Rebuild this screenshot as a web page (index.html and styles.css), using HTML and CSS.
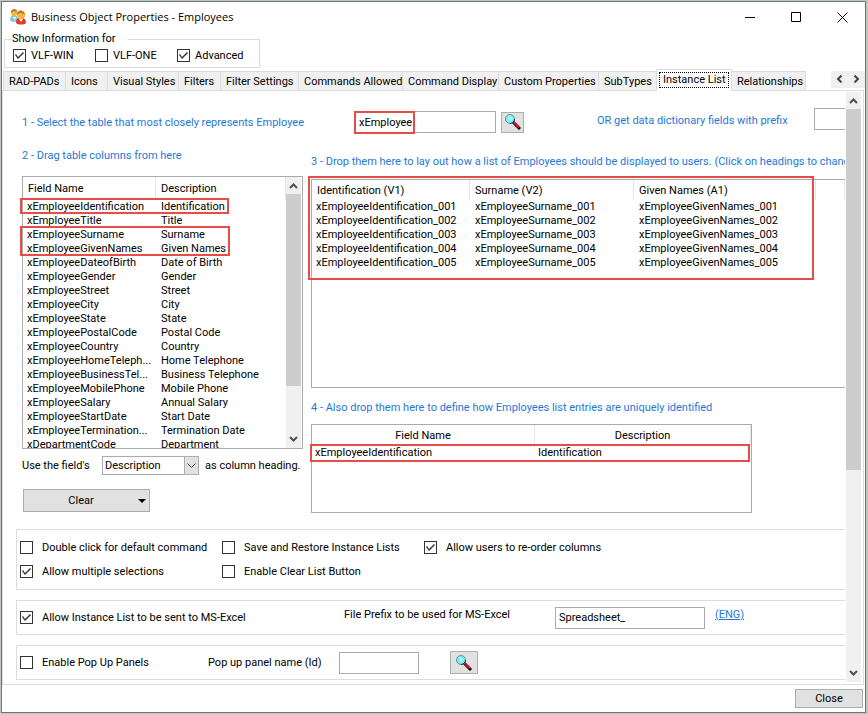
FILE: index.html
```
<!DOCTYPE html>
<html lang="en">
<head>
    <meta charset="UTF-8">
    <meta name="viewport" content="width=device-width, initial-scale=1.0">
    <title>Business Object Properties - Employees</title>
    <link rel="stylesheet" href="styles.css">
</head>
<body>

    <div class="window">
        <header class="titlebar">
            <svg class="app-icon" viewBox="0 0 16 16" width="16" height="16">
                <path d="M0 11c0-3 1-5 4-5s4 2 4 5l-3 2c-2 0-4 0-5-2z" fill="#8cc4ee"/>
                <path d="M3 8l2 3 1-3z" fill="#fff"/>
                <circle cx="4" cy="4" r="3" fill="#f3b53c"/>
                <path d="M1 4c-1-5 7-5 6-1-2-1-4-1-6 1z" fill="#c07c1c"/>
                <path d="M6 14c0-4 1-5 5-5s5 2 5 5c-2 2-8 2-10 0z" fill="#dd3b26"/>
                <path d="M9 10l2 3 2-3z" fill="#fff"/>
                <circle cx="11" cy="6" r="4" fill="#f5b83d"/>
                <path d="M7 6c-1-6 8-6 8 0-2-2-5-3-8 0z" fill="#c07c1c"/>
            </svg>
            <h1>Business Object Properties - Employees</h1>
            <div class="window-buttons">
                <button type="button" aria-label="Minimize"><svg viewBox="0 0 11 11" width="11" height="11"><path d="M0 5.500h10"/></svg></button>
                <button type="button" aria-label="Maximize"><svg viewBox="0 0 11 11" width="11" height="11"><path d="M.5.5h9v9h-9z"/></svg></button>
                <button type="button" aria-label="Close window"><svg viewBox="0 0 11 11" width="11" height="11"><path d="M.5.5l10 10M10.500.5l-10 10"/></svg></button>
            </div>
        </header>

        <fieldset class="show-info">
            <legend>Show Information for</legend>
            <label><input type="checkbox" checked> VLF-WIN</label>
            <label><input type="checkbox"> VLF-ONE</label>
            <label><input type="checkbox" checked> Advanced</label>
        </fieldset>

        <nav class="tabbar">
            <div class="tabs">
                <button type="button">RAD-PADs</button>
                <button type="button">Icons</button>
                <button type="button">Visual Styles</button>
                <button type="button">Filters</button>
                <button type="button">Filter Settings</button>
                <button type="button">Commands Allowed</button>
                <button type="button">Command Display</button>
                <button type="button">Custom Properties</button>
                <button type="button">SubTypes</button>
                <button type="button" class="active"><span>Instance List</span></button>
                <button type="button">Relationships</button>
            </div>
            <div class="tab-scroll">
                <button type="button" aria-label="Scroll left"><svg viewBox="0 0 7 8" width="7" height="8"><path d="M5.500 0.500L2 4l3.500 3.500"/></svg></button>
                <button type="button" aria-label="Scroll right"><svg viewBox="0 0 7 8" width="7" height="8"><path d="M1.500 0.500L5 4 1.500 7.500"/></svg></button>
            </div>
        </nav>

        <main class="panel">
            <div class="pane">
                <div class="source-row">
                    <label class="step step-table" for="table">1 - Select the table that most closely represents Employee</label>
                    <div class="source-field">
                        <input type="text" id="table" value="xEmployee">
                        <div class="mark mark-value"></div>
                    </div>
                    <button type="button" class="btn-find" aria-label="Find table">
                        <svg viewBox="0 0 16 16" width="16" height="16">
                            <path d="M8 8l7 7" stroke="#000" stroke-width="3"/>
                            <path d="M8 7.500l6 6" stroke="#e0103c" stroke-width="2"/>
                            <circle cx="5" cy="5" r="4.500" fill="#6ef0f4" stroke="#808890"/>
                            <path d="M3 3h1M5 3h1M4 4h1M6 4h1M3 5h1M5 5h1M7 5h1M4 6h1M6 6h1M5 7h1" stroke="#c8ffff"/>
                            <path d="M9.500 5a4.500 4.500 0 0 1-4.500 4.500" fill="none" stroke="#203040"/>
                        </svg>
                    </button>
                    <label class="step" for="prefix">OR get data dictionary fields with prefix</label>
                    <input type="text" id="prefix">
                </div>

                <div class="columns">
                    <section class="col-source">
                        <h2 class="step">2 - Drag table columns from here</h2>
                        <div class="list list-source">
                            <div class="list-rows">
                                <table>
                                    <colgroup><col class="w-field"><col></colgroup>
                                    <thead>
                                        <tr><th>Field Name</th><th>Description</th></tr>
                                    </thead>
                                    <tbody>
                                        <tr><td>xEmployeeIdentification</td><td>Identification</td></tr>
                                        <tr><td>xEmployeeTitle</td><td>Title</td></tr>
                                        <tr><td>xEmployeeSurname</td><td>Surname</td></tr>
                                        <tr><td>xEmployeeGivenNames</td><td>Given Names</td></tr>
                                        <tr><td>xEmployeeDateofBirth</td><td>Date of Birth</td></tr>
                                        <tr><td>xEmployeeGender</td><td>Gender</td></tr>
                                        <tr><td>xEmployeeStreet</td><td>Street</td></tr>
                                        <tr><td>xEmployeeCity</td><td>City</td></tr>
                                        <tr><td>xEmployeeState</td><td>State</td></tr>
                                        <tr><td>xEmployeePostalCode</td><td>Postal Code</td></tr>
                                        <tr><td>xEmployeeCountry</td><td>Country</td></tr>
                                        <tr><td>xEmployeeHomeTeleph...</td><td>Home Telephone</td></tr>
                                        <tr><td>xEmployeeBusinessTel...</td><td>Business Telephone</td></tr>
                                        <tr><td>xEmployeeMobilePhone</td><td>Mobile Phone</td></tr>
                                        <tr><td>xEmployeeSalary</td><td>Annual Salary</td></tr>
                                        <tr><td>xEmployeeStartDate</td><td>Start Date</td></tr>
                                        <tr><td>xEmployeeTermination...</td><td>Termination Date</td></tr>
                                        <tr><td>xDepartmentCode</td><td>Department</td></tr>
                                    </tbody>
                                </table>
                            </div>
                            <div class="scrollbar">
                                <svg viewBox="0 0 9 6" width="9" height="6"><path d="M1 5l3.500-3.500L8 5"/></svg>
                                <div class="track"><div class="thumb thumb-list"></div></div>
                                <svg viewBox="0 0 9 6" width="9" height="6"><path d="M1 1l3.500 3.500L8 1"/></svg>
                            </div>
                            <div class="mark mark-first"></div>
                            <div class="mark mark-names"></div>
                        </div>
                        <div class="heading-row">
                            <label for="heading">Use the field's</label>
                            <div class="combo">
                                <select id="heading">
                                    <option>Description</option>
                                </select>
                                <span class="combo-arrow"><svg viewBox="0 0 9 6" width="9" height="6"><path d="M.5.5l4 4 4-4"/></svg></span>
                            </div>
                            <span>as column heading.</span>
                        </div>
                        <button type="button" class="btn-clear"><span>Clear</span><i class="caret"></i></button>
                    </section>

                    <section class="col-target">
                        <h2 class="step">3 - Drop them here to lay out how a list of Employees should be displayed to users. (Click on headings to change)</h2>
                        <div class="list list-layout">
                            <table>
                                <colgroup><col class="w-id"><col class="w-surname"><col class="w-given"><col></colgroup>
                                <thead>
                                    <tr><th>Identification (V1)</th><th>Surname (V2)</th><th>Given Names (A1)</th><th></th></tr>
                                </thead>
                                <tbody>
                                    <tr><td>xEmployeeIdentification_001</td><td>xEmployeeSurname_001</td><td>xEmployeeGivenNames_001</td><td></td></tr>
                                    <tr><td>xEmployeeIdentification_002</td><td>xEmployeeSurname_002</td><td>xEmployeeGivenNames_002</td><td></td></tr>
                                    <tr><td>xEmployeeIdentification_003</td><td>xEmployeeSurname_003</td><td>xEmployeeGivenNames_003</td><td></td></tr>
                                    <tr><td>xEmployeeIdentification_004</td><td>xEmployeeSurname_004</td><td>xEmployeeGivenNames_004</td><td></td></tr>
                                    <tr><td>xEmployeeIdentification_005</td><td>xEmployeeSurname_005</td><td>xEmployeeGivenNames_005</td><td></td></tr>
                                </tbody>
                            </table>
                            <div class="mark mark-layout"></div>
                        </div>
                        <h2 class="step step-unique">4 - Also drop them here to define how Employees list entries are uniquely identified</h2>
                        <div class="list list-unique">
                            <table>
                                <colgroup><col class="w-key"><col></colgroup>
                                <thead>
                                    <tr><th>Field Name</th><th>Description</th></tr>
                                </thead>
                                <tbody>
                                    <tr><td>xEmployeeIdentification</td><td>Identification</td></tr>
                                </tbody>
                            </table>
                            <div class="mark mark-unique"></div>
                        </div>
                    </section>
                </div>

                <div class="group group-options">
                    <label><input type="checkbox"> Double click for default command</label>
                    <label><input type="checkbox"> Save and Restore Instance Lists</label>
                    <label><input type="checkbox" checked> Allow users to re-order columns</label>
                    <label><input type="checkbox" checked> Allow multiple selections</label>
                    <label><input type="checkbox"> Enable Clear List Button</label>
                </div>

                <div class="group group-excel">
                    <label><input type="checkbox" checked> Allow Instance List to be sent to MS-Excel</label>
                    <label class="prefix-label" for="file-prefix">File Prefix to be used for MS-Excel</label>
                    <input type="text" id="file-prefix" value="Spreadsheet_">
                    <a href="#">(ENG)</a>
                </div>

                <div class="group group-popup">
                    <label><input type="checkbox"> Enable Pop Up Panels</label>
                    <label for="panel-name">Pop up panel name (Id)</label>
                    <input type="text" id="panel-name">
                    <button type="button" class="btn-find" aria-label="Find panel">
                        <svg viewBox="0 0 16 16" width="16" height="16">
                            <path d="M8 8l7 7" stroke="#000" stroke-width="3"/>
                            <path d="M8 7.500l6 6" stroke="#e0103c" stroke-width="2"/>
                            <circle cx="5" cy="5" r="4.500" fill="#6ef0f4" stroke="#808890"/>
                            <path d="M3 3h1M5 3h1M4 4h1M6 4h1M3 5h1M5 5h1M7 5h1M4 6h1M6 6h1M5 7h1" stroke="#c8ffff"/>
                            <path d="M9.500 5a4.500 4.500 0 0 1-4.500 4.500" fill="none" stroke="#203040"/>
                        </svg>
                    </button>
                </div>
            </div>

            <div class="scrollbar">
                <svg viewBox="0 0 9 6" width="9" height="6"><path d="M1 5l3.500-3.500L8 5"/></svg>
                <div class="track"><div class="thumb thumb-page"></div></div>
                <svg viewBox="0 0 9 6" width="9" height="6"><path d="M1 1l3.500 3.500L8 1"/></svg>
            </div>
        </main>

        <footer>
            <button type="button" class="btn-close">Close</button>
        </footer>
    </div>

</body>
</html>
```
FILE: styles.css
```
* { box-sizing: border-box; }
body { margin: 0; padding: 1px 2px 1px 1px; background: #bfc6c1; color: #000; font: 11px/14px Roboto, "Liberation Sans", sans-serif; }
button, input, select { font: inherit; color: inherit; margin: 0; padding: 0; border-radius: 0; }
button { border: none; background: none; }
h1, h2 { margin: 0; font-weight: normal; }

.window { display: flex; flex-direction: column; min-height: calc(100vh - 2px); border: 1px solid #6b7a70; background: #fff; }

/* title bar */
.titlebar { display: flex; align-items: center; height: 30px; padding-left: 8px; }
.titlebar h1 { flex: 1; padding-left: 5px; font: 11px/16px "Open Sans", sans-serif; }
.window-buttons { display: flex; }
.window-buttons button { display: flex; align-items: center; justify-content: center; width: 46px; height: 28px; }
.window-buttons svg { fill: none; stroke: #000; }

/* checkboxes */
input[type="checkbox"] { appearance: none; flex: none; width: 13px; height: 13px; border: 1px solid #333; background: #fff; }
input[type="checkbox"]:checked::before { content: ""; display: block; width: 11px; height: 11px; background: #333; clip-path: polygon(1px 5px, 2px 4px, 4px 7px, 9px 2px, 10px 3px, 4px 9px); }
label { white-space: nowrap; }

.show-info { display: grid; grid-template-columns: repeat(3, 82px); width: 256px; height: 36px; margin: 0 0 0 2px; padding: 3px 0 0 8px; border: 1px solid #dcdcdc; }
.show-info legend { margin-left: -1px; padding: 0 12px 0 0; }
.show-info label { display: flex; align-items: center; gap: 5px; height: 13px; }

/* tabs */
.tabbar { display: flex; justify-content: space-between; height: 21px; margin-top: 1px; }
.tabs { display: grid; grid-template-columns: 63px 42px 71px 42px 78px 104px 96px 100px 58px 75px 74px; align-items: end; padding-left: 1px; }
.tabs button { height: 19px; padding: 2px 0 0 5px; border: 1px solid #dcdcdc; border-width: 1px 1px 0 0; background: #f0f0f0; text-align: left; white-space: nowrap; }
.tabs button:first-child { border-left-width: 1px; }
.tabs .active { position: relative; height: 22px; margin: 0 0 -1px -1px; padding: 2px; border-left-width: 1px; background: #fff; }
.tabs .active span { display: block; height: 16px; padding-left: 3px; border: 1px dotted #000; margin-bottom: 2px; }
.tab-scroll { display: flex; align-self: flex-start; height: 17px; margin-top: 2px; background: #f0f0f0; }
.tab-scroll button { width: 17px; }
.tab-scroll svg { fill: none; stroke: #444; stroke-width: 2; }

/* panel */
.panel { flex: 1; display: flex; gap: 1px; margin-right: 1px; padding: 1px 2px 2px 0; border: 1px solid #dcdcdc; }
.pane { flex: 1; min-width: 0; overflow: hidden; padding-left: 13px; }
.scrollbar { display: flex; flex-direction: column; align-items: center; width: 15px; padding: 6px 0; background: #f0f0f0; }
.scrollbar svg { flex: none; fill: none; stroke: #505050; stroke-width: 2; }
.track { flex: 1; width: 15px; padding: 5px 0; }
.thumb { background: #cdcdcd; }
.thumb-page { height: 65%; }
.thumb-list { height: 81%; }

.step { color: #1e78d7; font-size: 11px; line-height: 14px; white-space: nowrap; }
input[type="text"] { height: 22px; padding: 0 3px; border: 1px solid #a9abb0; background: #fff; }
.mark { position: absolute; border: 2px solid #e84c46; pointer-events: none; }

.source-row { display: grid; grid-template-columns: 333px 141px 101px 217px 60px; align-items: center; padding: 16px 0 0 6px; }
.step-table { padding-top: 4px; }
.source-field { position: relative; padding-top: 3px; }
.source-field input { display: block; width: 100%; }
#prefix { align-self: start; width: 60px; }
.mark-value { left: -1px; top: 3px; width: 61px; height: 23px; }
.btn-find { display: flex; align-items: center; justify-content: center; height: 21px; border: 1px solid #adadad; background: #e1e1e1; }
.source-row .btn-find { margin: 3px 0 0 5px; width: 23px; }

.columns { display: grid; grid-template-columns: 281px 1fr; gap: 8px; padding-left: 6px; }
.col-source { padding-top: 16px; }
.col-target { min-width: 0; padding-top: 22px; }

/* lists */
.list { position: relative; border: 1px solid #a9abb0; }
.list table { width: 100%; border-collapse: separate; border-spacing: 0; table-layout: fixed; }
.list th { padding: 1px 5px 0; border-right: 1px solid #e5e5e5; font-weight: normal; text-align: left; white-space: nowrap; }
.list td { height: 14px; padding: 0 4px; white-space: nowrap; line-height: 14px; }
.list td:not(:first-child) { padding-left: 5px; }

.list-source { display: flex; height: 273px; margin-top: 13px; }
.list-rows { width: 263px; height: 271px; overflow: hidden; }
.list-source th { height: 23px; }
.list-source .scrollbar { height: 100%; margin: 0 1px 0 auto; }
.w-field { width: 133px; }
.mark-first { left: -3px; top: 21px; width: 209px; height: 16px; }
.mark-names { left: -3px; top: 49px; width: 210px; height: 30px; }

.list-layout { height: 209px; margin-top: 10px; border-right: none; }
.list-layout th { height: 20px; }
.w-id { width: 158px; }
.w-surname { width: 164px; }
.w-given { width: 182px; }
.mark-layout { left: -4px; top: -4px; width: 506px; height: 104px; }

.step-unique { margin-top: 13px; }
.list-unique { max-width: 441px; height: 89px; margin-top: 9px; }
.list-unique th { height: 21px; text-align: center; }
.list-unique td, .list-unique td:not(:first-child) { padding: 0 3px; }
.w-key { width: 223px; }
.mark-unique { left: -2px; top: 19px; width: 440px; height: 18px; }

.heading-row { display: flex; align-items: center; gap: 6px; margin-top: 7px; }
.heading-row label { width: 74px; }
.combo { position: relative; }
.combo select { display: block; width: 97px; height: 19px; padding-left: 2px; border: 1px solid #a9abb0; background: #fff; appearance: none; }
.combo-arrow { position: absolute; right: 0; top: 0; display: flex; align-items: center; justify-content: center; width: 15px; height: 19px; border: 1px solid #adadad; background: #e1e1e1; pointer-events: none; }
.combo-arrow svg { fill: none; stroke: #444; }
.btn-clear { display: flex; align-items: center; width: 127px; height: 23px; margin: 14px 0 0 1px; padding-right: 3px; border: 1px solid #adadad; background: #e1e1e1; }
.btn-clear span { flex: 1; }
.caret { border: 4px solid transparent; border-top-color: #000; border-bottom: none; }

/* option groups */
.group { display: grid; align-items: center; height: 35px; margin-top: 10px; padding-left: 3px; border: 1px solid #dcdcdc; border-right: none; }
.group label { display: flex; align-items: center; gap: 9px; }
.group-options { grid-template-columns: 202px 202px 1fr; grid-auto-rows: 24px; align-content: center; height: 61px; margin-top: 16px; }
.group-excel { grid-template-columns: 324px 211px 150px 1fr; }
.group-excel .prefix-label, .group-excel a { padding-bottom: 6px; }
.group-excel a { padding-left: 10px; color: #1e78d7; }
.group-popup { grid-template-columns: 188px 131px 80px 59px; }
.group-popup .btn-find { height: 23px; margin-left: 31px; }

footer { display: flex; justify-content: flex-end; padding: 4px 2px 4px 0; }
.btn-close { width: 68px; height: 19px; padding-top: 1px; border: 1px solid #adadad; background: #e1e1e1; }
```
